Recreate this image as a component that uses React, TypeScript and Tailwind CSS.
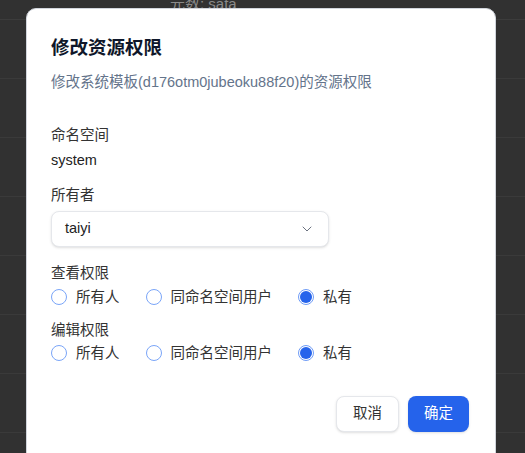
import { ChevronDown } from 'lucide-react';

const font = { fontFamily: '"Liberation Sans", "Noto Sans CJK SC", sans-serif' };

function Radio({ label, checked }: { label: string; checked?: boolean }) {
  return (
    <label className="flex items-center gap-[9px]">
      {checked ? (
        <span className="flex h-4 w-4 items-center justify-center rounded-full border border-[#6f9cf7]">
          <span className="h-[12px] w-[12px] rounded-full bg-[#2563eb]" />
        </span>
      ) : (
        <span className="h-4 w-4 rounded-full border-[1.5px] border-[#7aa5f8]" />
      )}
      <span className="text-[14.5px] leading-5 text-[#333]">{label}</span>
    </label>
  );
}

function RadioRow() {
  return (
    <div className="flex items-center gap-[26px]">
      <Radio label="所有人" />
      <Radio label="同命名空间用户" />
      <Radio label="私有" checked />
    </div>
  );
}

export default function App() {
  return (
    <div className="relative h-[453px] w-full overflow-hidden bg-[#313131]" style={font}>
      {/* page behind the overlay */}
      <div className="flex flex-col">
        <div className="h-[20px] overflow-hidden border-b border-[#3c3c3c]">
          <div className="-mt-[7px] pl-[170px] text-[15px] text-[#8a8a8a]">元数: sata</div>
        </div>
        {[0, 1, 2, 3, 4, 5, 6].map(i => (
          <div key={i} className="h-[59px] border-b border-[#3a3a3a]" />
        ))}
      </div>

      {/* dialog */}
      <div className="absolute inset-0">
        <div className="ml-[26px] mt-[8px] h-[480px] w-[470px] rounded-[10px] border border-gray-300 bg-white px-[24px] pt-[25px]">
          <h2 className="text-[18.5px] font-bold leading-7 text-[#0f172a]">修改资源权限</h2>
          <p className="mt-[10px] text-[14.5px] leading-5 text-[#64748b]">修改系统模板(d176otm0jubeoku88f20)的资源权限</p>

          <div className="mt-[33px] text-[14.5px] leading-5 text-[#333]">命名空间</div>
          <div className="mt-[5px] text-[14.5px] leading-5 text-[#222]">system</div>

          <div className="mt-[15px] text-[14.5px] leading-5 text-[#333]">所有者</div>
          <button className="mt-[6px] flex h-[36px] w-[278px] items-center justify-between rounded-lg border border-[#e5e7eb] bg-white pl-[13px] pr-[13px] shadow-sm">
            <span className="text-[14.5px] text-[#222]">taiyi</span>
            <ChevronDown size={16} strokeWidth={1.5} className="text-[#6b7280]" />
          </button>

          <div className="mt-[16px] text-[14.5px] leading-5 text-[#333]">查看权限</div>
          <div className="mt-[4px]">
            <RadioRow />
          </div>

          <div className="mt-[13px] text-[14.5px] leading-5 text-[#333]">编辑权限</div>
          <div className="mt-[3px]">
            <RadioRow />
          </div>

          <div className="mt-[33px] flex justify-end gap-[9px] pr-[2px]">
            <button className="h-[36px] rounded-lg border border-[#e5e7eb] bg-white px-4 text-[14.5px] text-[#333] shadow-sm">取消</button>
            <button className="h-[36px] rounded-lg bg-[#2563eb] px-4 text-[14.5px] text-white shadow-sm">确定</button>
          </div>
        </div>
      </div>
    </div>
  );
}
